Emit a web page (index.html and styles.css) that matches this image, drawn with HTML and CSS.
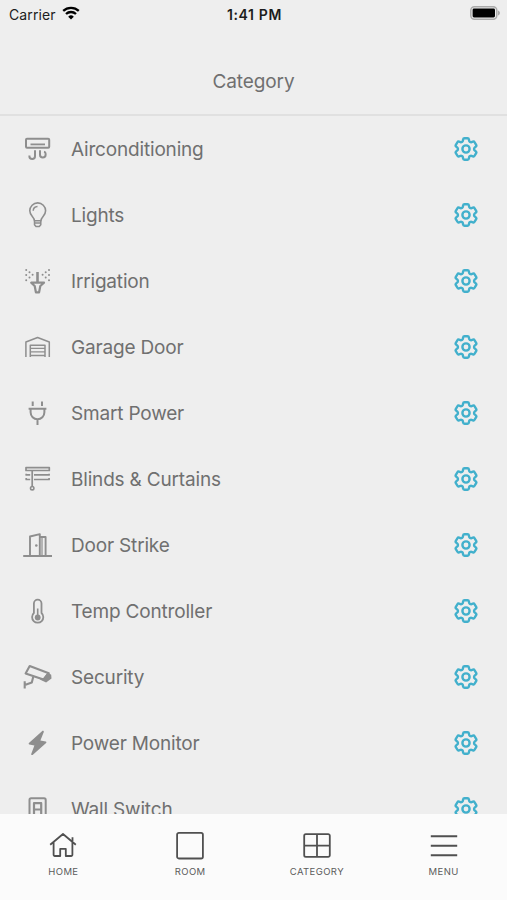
FILE: index.html
```html
<!DOCTYPE html>
<html lang="en">
<head>
  <meta charset="UTF-8">
  <meta name="viewport" content="width=device-width, initial-scale=1">
  <title>Category</title>
  <link rel="stylesheet" href="styles.css">
</head>
<body>
  <svg class="defs" width="0" height="0">
    <symbol id="gear" viewBox="2 2 20 20">
      <path d="M9.594 3.94c.09-.542.56-.94 1.11-.94h2.593c.55 0 1.02.398 1.11.94l.213 1.281c.063.374.313.686.645.87.074.04.147.083.22.127.325.196.72.257 1.075.124l1.217-.456a1.125 1.125 0 0 1 1.37.49l1.296 2.247a1.125 1.125 0 0 1-.26 1.431l-1.003.827c-.293.241-.438.613-.43.992a7.723 7.723 0 0 1 0 .255c-.008.378.137.75.43.991l1.004.827c.424.35.534.955.26 1.43l-1.298 2.247a1.125 1.125 0 0 1-1.369.491l-1.217-.456c-.355-.133-.75-.072-1.076.124a6.47 6.47 0 0 1-.22.128c-.331.183-.581.495-.644.869l-.213 1.281c-.09.543-.56.94-1.11.94h-2.594c-.55 0-1.019-.398-1.11-.94l-.213-1.281c-.062-.374-.312-.686-.644-.87a6.52 6.52 0 0 1-.22-.127c-.325-.196-.72-.257-1.076-.124l-1.217.456a1.125 1.125 0 0 1-1.369-.49l-1.297-2.247a1.125 1.125 0 0 1 .26-1.431l1.004-.827c.292-.24.437-.613.43-.991a6.932 6.932 0 0 1 0-.255c.007-.38-.138-.751-.43-.992l-1.004-.827a1.125 1.125 0 0 1-.26-1.43l1.297-2.247a1.125 1.125 0 0 1 1.37-.491l1.216.456c.356.133.751.072 1.076-.124.072-.044.146-.086.22-.128.332-.183.582-.495.644-.869l.214-1.28Z"/>
      <circle cx="12" cy="12" r="3"/>
    </symbol>
  </svg>

  <div class="status">
    <div class="carrier">
      <span>Carrier</span>
      <svg class="wifi" viewBox="0 0 18 14">
        <path d="M1.2 4.9a11.4 11.4 0 0 1 15.6 0M4 8a7.3 7.3 0 0 1 10 0"/>
        <path class="solid" d="M9 13.6 6.2 10.7a4 4 0 0 1 5.6 0z"/>
      </svg>
    </div>
    <div class="time">1:41 PM</div>
    <svg class="battery" viewBox="0 0 30 14">
      <rect class="shell" x=".8" y=".8" width="26" height="12.4" rx="3.6"/>
      <rect x="2.6" y="2.6" width="22.4" height="8.8" rx="1.4"/>
      <path class="tip" d="M28 4.6c2.6.8 2.6 4 0 4.8z"/>
    </svg>
  </div>

  <header class="header">
    <h1>Category</h1>
  </header>

  <main class="list">
    <div class="row">
      <svg class="icon" viewBox="0 0 32 32">
        <rect stroke-width="2" x="4" y="5.7" width="23.2" height="9" rx="1"/>
        <path stroke-width="1.8" d="M8.5 11.4h14.5"/>
        <path stroke-width="2" d="M13 17.3v5.900a2.800 2.800 0 0 1-5.600 0v-.8M18 17.300v4.400a2.800 2.800 0 0 0 5.600 0v-1a1.900 1.900 0 0 0-1.600-1.900"/>
      </svg>
      <span class="name">Airconditioning</span>
      <svg class="gear"><use href="#gear"/></svg>
    </div>
    <div class="row">
      <svg class="icon" viewBox="0 0 32 32">
        <path stroke-width="1.6" d="M12.400 21.800c0-4-4.600-4.800-4.600-10a7.900 7.900 0 0 1 15.800 0c0 5.200-4.600 6-4.600 10z"/>
        <path stroke-width="1.5" d="M12.500 24h6.300M12.500 21.800v4l1.500 1.700h3.300l1.500-1.700v-4M11.200 11.700a4.500 4.500 0 0 1 4.300-4.200"/>
      </svg>
      <span class="name">Lights</span>
      <svg class="gear"><use href="#gear"/></svg>
    </div>
    <div class="row">
      <svg class="icon" viewBox="0 0 32 32">
        <path stroke-width="2.6" d="M15.500 7v10"/>
        <path stroke-width="2.2" d="M9.200 17.700h12.800l-3.700 3.300-1.200 6.300h-3.200L12.700 21z"/>
        <path stroke-width="2" stroke-linecap="round" d="M4.200 4.900h.01M7.500 7.200h.01M10.600 9.800h.01M7.500 12.400h.01M4.200 10h.01M4.200 15.200h.01M27 4.900h.01M23.700 7.200h.01M20.600 9.800h.01M23.700 12.400h.01M27 10h.01M27 15.200h.01"/>
      </svg>
      <span class="name">Irrigation</span>
      <svg class="gear"><use href="#gear"/></svg>
    </div>
    <div class="row">
      <svg class="icon" viewBox="0 0 32 32">
        <path stroke-width="1.5" d="M3.900 26V11l11.700-4.500L27.300 11v15M8.300 26V14.200h14.700V26"/>
        <path stroke-width="1.3" d="M8.300 17.300h14.700M8.300 20.900h14.700M8.300 24.500h14.700"/>
      </svg>
      <span class="name">Garage Door</span>
      <svg class="gear"><use href="#gear"/></svg>
    </div>
    <div class="row">
      <svg class="icon" viewBox="0 0 32 32">
        <path stroke-width="2" d="M10.700 4.400v4.500M20 4.400v4.500M6.600 11.800h17.800M8.600 12v3.300a6.900 6.900 0 0 0 13.800 0V12M15.500 22.300v5.800"/>
      </svg>
      <span class="name">Smart Power</span>
      <svg class="gear"><use href="#gear"/></svg>
    </div>
    <div class="row">
      <svg class="icon" viewBox="0 0 32 32">
        <path stroke-width="1.700" d="M4 4.600h23.300v2.900H4z"/>
        <path stroke-width="1.700" d="M4.200 10.700v1.200h4M12 11.900h15.100v-1.200M4.200 15v1.500h4M12 16.500h15.100V15M10.200 8v15.500"/>
        <circle stroke-width="1.600" cx="10.200" cy="25.200" r="1.700"/>
      </svg>
      <span class="name">Blinds &amp; Curtains</span>
      <svg class="gear"><use href="#gear"/></svg>
    </div>
    <div class="row">
      <svg class="icon" viewBox="0 0 32 32">
        <path stroke-width="2" d="M1.200 27h28.800"/>
        <path stroke-width="1.900" d="M8 27V7.500l9.800-2.400V27M18 8h5.600v19"/>
        <path stroke-width="1.200" d="M20 8v19"/>
        <circle class="fill" cx="14.300" cy="16.500" r="1.300"/>
      </svg>
      <span class="name">Door Strike</span>
      <svg class="gear"><use href="#gear"/></svg>
    </div>
    <div class="row">
      <svg class="icon" viewBox="0 0 32 32">
        <path stroke-width="1.800" d="M11.900 18V8.500a3.800 3.800 0 0 1 7.600 0V18a5.600 5.600 0 1 1-7.600 0z"/>
        <path stroke-width="1.600" d="M15.700 13.500v8"/>
        <circle class="fill" cx="15.700" cy="22.500" r="2.900"/>
      </svg>
      <span class="name">Temp Controller</span>
      <svg class="gear"><use href="#gear"/></svg>
    </div>
    <div class="row">
      <svg class="icon" viewBox="0 0 32 32">
        <path stroke-width="2.100" d="M7.700 5 26.800 12.200 21.500 18.600 3.600 12.400zM11.300 15.500 9.800 21.500 2.800 24M2.700 20.300v7.200"/>
        <path class="fill" d="m25.600 11.400 3.600 2.400.3 3.800-5.400 4-6.300-3.200 3.600-1.400z"/>
      </svg>
      <span class="name">Security</span>
      <svg class="gear"><use href="#gear"/></svg>
    </div>
    <div class="row">
      <svg class="icon" viewBox="0 0 32 32">
        <path class="fill" d="M20 4.200 6.900 16c-.5.500-.2 1.200.4 1.400l5.100 1-3.200 8.700c-.2.800.700 1.300 1.400.8l13.500-12c.6-.5.300-1.200-.4-1.300l-5.300-1L21.800 5c.3-.8-.9-1.600-1.800-.8z"/>
      </svg>
      <span class="name">Power Monitor</span>
      <svg class="gear"><use href="#gear"/></svg>
    </div>
    <div class="row">
      <svg class="icon" viewBox="0 0 32 32">
        <rect stroke-width="2" x="7.500" y="5.300" width="16.200" height="22.400" rx="1.600"/>
        <path stroke-width="2.200" d="M12 24V10.200h7.200V24zM12 16.500h7.200"/>
      </svg>
      <span class="name">Wall Switch</span>
      <svg class="gear"><use href="#gear"/></svg>
    </div>
  </main>

  <nav class="tabs">
    <a class="tab">
      <svg viewBox="0 0 28 28"><path d="M1.200 12.700 14 2l12.800 10.700M23.500 10V5.200M4.600 10v12.800a1.200 1.200 0 0 0 1.200 1.200h5.400v-7.200h5.600V24h5.400a1.200 1.200 0 0 0 1.200-1.200V10"/></svg>
      <span>HOME</span>
    </a>
    <a class="tab">
      <svg viewBox="0 0 28 28"><rect x="1.100" y=".9" width="25.800" height="25.600" rx="1.800"/></svg>
      <span>ROOM</span>
    </a>
    <a class="tab">
      <svg viewBox="0 0 28 28"><path d="M2.800 2.200h22.400a1.600 1.600 0 0 1 1.600 1.600v19.400a1.600 1.600 0 0 1-1.600 1.600H2.800a1.600 1.600 0 0 1-1.600-1.600V3.800a1.600 1.600 0 0 1 1.600-1.600zM14 2.200v22.600M1.200 13.700h25.600"/></svg>
      <span>CATEGORY</span>
    </a>
    <a class="tab">
      <svg viewBox="0 0 28 28"><path stroke-width="2" d="M.8 4.200h26.400M.8 13.700h26.400M.8 23.300h26.400"/></svg>
      <span>MENU</span>
    </a>
  </nav>
</body>
</html>
```
FILE: styles.css
```css
* { box-sizing: border-box; }

body {
  margin: 0;
  height: 900px;
  display: flex;
  flex-direction: column;
  overflow: hidden;
  background: #eeeeee;
  color: #707070;
  font-family: Inter, "Liberation Sans", sans-serif;
}

svg { display: block; }
.defs { position: absolute; }

.status {
  flex: none;
  height: 28px;
  padding: 0 7px 0 9px;
  display: grid;
  grid-template-columns: 1fr auto 1fr;
  align-items: center;
  color: #1c1c1c;
  font-size: 14px;
}
.carrier { display: flex; align-items: center; gap: 6px; letter-spacing: .1px; }
.wifi { width: 18px; height: 14px; margin-top: -2px; fill: none; stroke: #000; stroke-width: 2.3; }
.wifi .solid { fill: #000; stroke: none; }
.time { font-weight: 600; letter-spacing: .65px; }
.battery { width: 30px; height: 14px; margin-top: -2px; justify-self: end; }
.battery .shell { fill: none; stroke: #aaa; stroke-width: 1.5; }
.battery .tip { fill: #aaa; }

.header {
  flex: none;
  height: 88px;
  padding-top: 42px;
  border-bottom: 2px solid #e0e0e0;
}
.header h1 {
  margin: 0;
  font-size: 19px;
  font-weight: 400;
  line-height: 24px;
  letter-spacing: -.1px;
  text-align: center;
}

.list { flex: 1; min-height: 0; overflow: hidden; }
.row {
  height: 66px;
  padding: 0 29px 0 22px;
  display: flex;
  align-items: center;
}
.icon {
  width: 32px;
  height: 32px;
  fill: none;
  stroke: #8e8e8e;
  stroke-linejoin: round;
}
.icon .fill { fill: #8e8e8e; stroke: none; }
.name { flex: 1; margin-left: 17px; padding-top: 1px; font-size: 19px; line-height: 25px; letter-spacing: -.18px; }
.gear { width: 24px; height: 24px; fill: none; stroke: #42b0cc; stroke-width: 2; }

.tabs {
  flex: none;
  height: 86px;
  padding-top: 18px;
  display: grid;
  grid-template-columns: repeat(4, 1fr);
  background: #fbfbfb;
  color: #5c5c5c;
}
.tab { display: flex; flex-direction: column; align-items: center; gap: 6px; }
.tab svg { width: 28px; height: 28px; fill: none; stroke: #505050; stroke-width: 1.8; stroke-linejoin: round; }
.tab span { font-size: 9.5px; line-height: 12px; letter-spacing: .4px; }
```
